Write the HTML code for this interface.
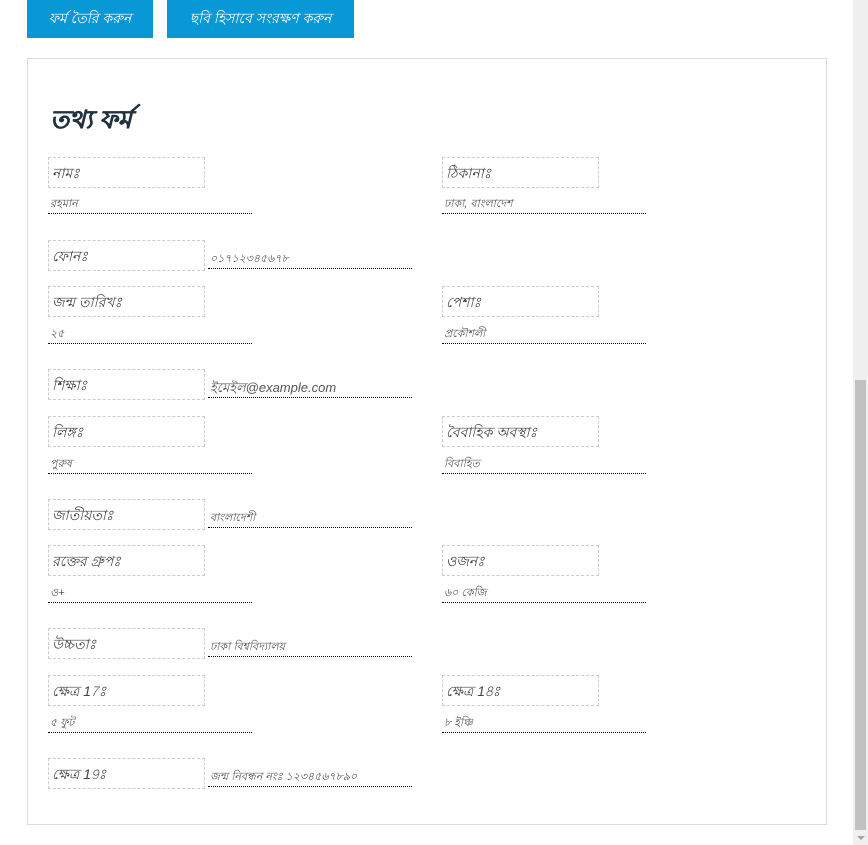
<!DOCTYPE html>
<html><head><meta charset="utf-8"><style>
*{margin:0;padding:0;box-sizing:border-box}
body{width:868px;height:845px;overflow:hidden;background:#fff;position:relative;font-family:"Liberation Sans","Noto Sans CJK SC",sans-serif}
.btn{position:absolute;top:0;height:38px;background:#0898d6;color:#fff;font-size:14px;font-style:italic;display:flex;align-items:center;justify-content:center}
.card{position:absolute;left:27px;top:58px;width:800px;height:767px;border:1px solid #ddd}
h1{position:absolute;left:50px;top:100px;font-size:25px;font-weight:900;font-style:italic;color:#22313f;text-shadow:0.5px 0 0 #22313f}
.lb{position:absolute;width:157px;height:31px;border:1px dashed #ccc;font-size:14px;font-style:italic;color:#444;padding:8px 3px;line-height:14px;white-space:nowrap}
.v{position:absolute;width:204px;border-bottom:1px dotted #000;font-size:11px;font-style:italic;color:#555;padding-left:2px;height:18px;line-height:16px;white-space:nowrap}
.sb{position:absolute;left:853px;top:0;width:15px;height:845px;background:#f0f0f0}
.th{position:absolute;left:855px;top:380px;width:11px;height:450px;background:#c1c1c1}
.ar{position:absolute;left:857px;top:836px;width:0;height:0;border-left:4px solid transparent;border-right:4px solid transparent;border-top:4px solid #a3a3a3}
</style></head><body>
<div class="btn" style="left:27px;width:126px">ফর্ম তৈরি করুন</div>
<div class="btn" style="left:167px;width:187px">ছবি হিসাবে সংরক্ষণ করুন</div>
<div class="card"></div>
<h1>তথ্য ফর্ম</h1>

<div class="lb" style="left:48px;top:157px">নামঃ</div><div class="v" style="left:48px;top:196px">রহমান</div>
<div class="lb" style="left:442px;top:157px">ঠিকানাঃ</div><div class="v" style="left:442px;top:196px">ঢাকা, বাংলাদেশ</div>

<div class="lb" style="left:48px;top:240px">ফোনঃ</div><div class="v" style="left:208px;top:251px">০১৭১২৩৪৫৬৭৮</div>

<div class="lb" style="left:48px;top:286px">জন্ম তারিখঃ</div><div class="v" style="left:48px;top:326px">২৫</div>
<div class="lb" style="left:442px;top:286px">পেশাঃ</div><div class="v" style="left:442px;top:326px">প্রকৌশলী</div>

<div class="lb" style="left:48px;top:369px">শিক্ষাঃ</div><div class="v" style="left:208px;top:380px;font-size:13px">ইমেইল@example.com</div>

<div class="lb" style="left:48px;top:416px">লিঙ্গঃ</div><div class="v" style="left:48px;top:456px">পুরুষ</div>
<div class="lb" style="left:442px;top:416px">বৈবাহিক অবস্থাঃ</div><div class="v" style="left:442px;top:456px">বিবাহিত</div>

<div class="lb" style="left:48px;top:499px">জাতীয়তাঃ</div><div class="v" style="left:208px;top:510px">বাংলাদেশী</div>

<div class="lb" style="left:48px;top:545px">রক্তের গ্রুপঃ</div><div class="v" style="left:48px;top:585px">ও+</div>
<div class="lb" style="left:442px;top:545px">ওজনঃ</div><div class="v" style="left:442px;top:585px">৬০ কেজি</div>

<div class="lb" style="left:48px;top:628px">উচ্চতাঃ</div><div class="v" style="left:208px;top:639px">ঢাকা বিশ্ববিদ্যালয়</div>

<div class="lb" style="left:48px;top:675px">ক্ষেত্র 17ঃ</div><div class="v" style="left:48px;top:715px">৫ ফুট</div>
<div class="lb" style="left:442px;top:675px">ক্ষেত্র 18ঃ</div><div class="v" style="left:442px;top:715px">৮ ইঞ্চি</div>

<div class="lb" style="left:48px;top:758px">ক্ষেত্র 19ঃ</div><div class="v" style="left:208px;top:769px">জন্ম নিবন্ধন নংঃ ১২৩৪৫৬৭৮৯০</div>

<div class="sb"></div><div class="th"></div><div class="ar"></div>
</body></html>
